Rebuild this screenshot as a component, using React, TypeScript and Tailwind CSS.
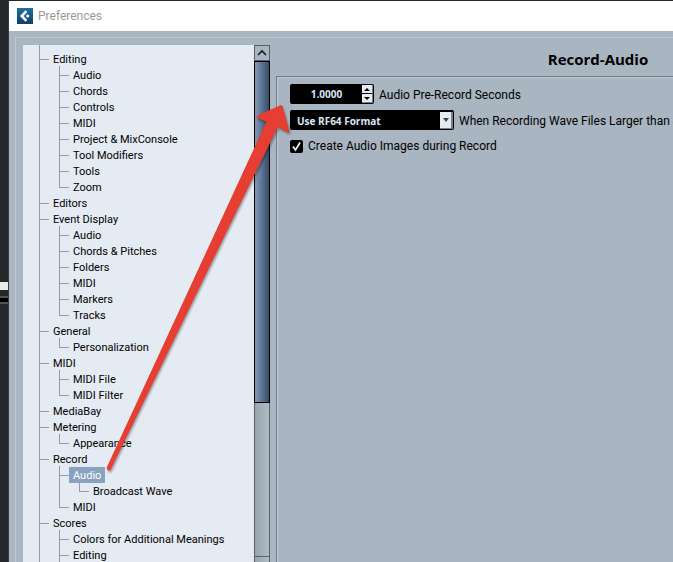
import { useState } from "react";

type TreeNode = {
    label: string;
    children?: TreeNode[];
    more?: boolean; // the branch line carries on below this entry
}

const leaves = (...labels: string[]): TreeNode[] => labels.map((label) => ({ label }));

const sections: TreeNode[] = [
    { label: 'Editing', children: leaves('Audio', 'Chords', 'Controls', 'MIDI', 'Project & MixConsole', 'Tool Modifiers', 'Tools', 'Zoom') },
    { label: 'Editors' },
    { label: 'Event Display', children: leaves('Audio', 'Chords & Pitches', 'Folders', 'MIDI', 'Markers', 'Tracks') },
    { label: 'General', children: leaves('Personalization') },
    { label: 'MIDI', children: leaves('MIDI File', 'MIDI Filter') },
    { label: 'MediaBay' },
    { label: 'Metering', children: leaves('Appearance') },
    { label: 'Record', children: [{ label: 'Audio', children: leaves('Broadcast Wave') }, { label: 'MIDI' }] },
    { label: 'Scores', more: true, children: [{ label: 'Colors for Additional Meanings' }, { label: 'Editing', more: true }] },
];

function Branch({ node, path, last, selected, onSelect }: {
    node: TreeNode;
    path: string;
    last: boolean;
    selected: string;
    onSelect: (path: string) => void;
}) {
    const active = path === selected;

    return (
        <li className="relative">
            <span className={`absolute -top-px left-0 w-px bg-[#939eac] ${last ? 'h-[10px]' : 'bottom-0'}`} />
            <div className="flex h-4 items-center">
                <span className="h-px w-[10px] bg-[#939eac]" />
                <button
                    type="button"
                    onClick={() => onSelect(path)}
                    className={`h-4 px-1 leading-[18px] whitespace-nowrap ${active ? 'bg-[#87a3bf] text-white' : ''}`}
                >
                    {node.label}
                </button>
            </div>
            {node.children && (
                <ul className="ml-5">
                    {node.children.map((child, i) => (
                        <Branch
                            key={child.label}
                            node={child}
                            path={`${path}-${child.label}`}
                            last={i === node.children!.length - 1 && !child.more}
                            selected={selected}
                            onSelect={onSelect}
                        />
                    ))}
                </ul>
            )}
        </li>
    );
}

function TitleBar() {
    return (
        <header className="flex h-[30px] shrink-0 items-center gap-[5px] bg-white pl-2">
            <svg className="size-4" viewBox="0 0 16 16">
                <defs>
                    <linearGradient id="logo" x1="0" y1="0" x2="0" y2="1">
                        <stop offset="0" stopColor="#1f6f9f" />
                        <stop offset="1" stopColor="#123f63" />
                    </linearGradient>
                </defs>
                <rect width="16" height="16" fill="url(#logo)" />
                <path d="M8.500 2.300 3 8l5.500 5.700 1.700-1.800L6.700 8l3.500-3.900z" fill="#fff" />
                <circle cx="10.700" cy="8" r="1.600" fill="#fff" />
            </svg>
            <span className="text-[12px] leading-4 text-[#999]">Preferences</span>
        </header>
    );
}

function ScrollBar() {
    return (
        <div className="flex w-4 shrink-0 flex-col border-x border-[#56616d] bg-linear-to-r from-[#98a4ae] to-[#b0bbc5]">
            <button type="button" aria-label="Scroll up" className="flex h-4 items-center justify-center border-y border-[#56616d] bg-[#a9b5bf]">
                <svg className="h-2 w-3" viewBox="0 0 12 8">
                    <path d="M2 6 6 2l4 4" fill="none" stroke="#111a24" strokeWidth="1.600" />
                </svg>
            </button>
            <div className="-mx-px h-[342px] shrink-0 border border-black bg-linear-to-r from-[#8298b0] via-[#5b7595] to-[#384a61]" />
            <div className="grow" />
            <div className="h-[6px] shrink-0 border-t border-[#56616d]" />
        </div>
    );
}

function Spinner() {
    const [value, setValue] = useState(1);

    return (
        <div className="flex h-5 w-[84px] shrink-0 rounded-[2px] bg-black p-px">
            <input
                id="pre-record"
                value={value.toFixed(4)}
                onChange={(e) => setValue(Number(e.target.value) || 0)}
                className="w-[71px] text-center font-['Open_Sans'] text-[10px] font-bold text-[#dbe6f5]"
            />
            <div className="flex w-[11px] flex-col gap-px border-r border-b border-[#77808a]">
                <button type="button" aria-label="Increase" onClick={() => setValue(value + 1)} className="flex flex-1 items-center justify-center bg-[#e4ebf3]">
                    <svg className="h-[3px] w-[6px]" viewBox="0 0 6 3"><path d="M0 3 3 0l3 3z" /></svg>
                </button>
                <button type="button" aria-label="Decrease" onClick={() => setValue(Math.max(0, value - 1))} className="flex flex-1 items-center justify-center bg-[#e4ebf3]">
                    <svg className="h-[3px] w-[6px]" viewBox="0 0 6 3"><path d="M0 0h6L3 3z" /></svg>
                </button>
            </div>
        </div>
    );
}

function RecordAudioPage() {
    return (
        <main className="flex w-[644px] shrink-0 flex-col">
            <h1 className="pt-1 pb-[7px] text-center font-['Open_Sans'] text-[15px] leading-5 font-bold">Record-Audio</h1>
            <div className="flex grow flex-col gap-[6px] border-t border-l border-[#6f7b88] pt-[7px] pl-[13px] text-[12px] leading-[22px] shadow-[inset_1px_1px_0_#c0cad4]">
                <div className="flex h-5 gap-[5px]">
                    <Spinner />
                    <label htmlFor="pre-record">Audio Pre-Record Seconds</label>
                </div>
                <div className="flex h-5 gap-[5px]">
                    <div className="relative h-5 w-[164px] shrink-0">
                        <select id="wave-format" className="h-5 w-full appearance-none rounded-[2px] bg-black pl-[7px] font-['Open_Sans'] text-[10px] font-bold text-[#dbe6f5]">
                            <option>Use RF64 Format</option>
                            <option>Split Files</option>
                            <option>Use Wave64 Format</option>
                        </select>
                        <span className="pointer-events-none absolute top-[2px] right-px flex h-[17px] w-[13px] items-center justify-center border-r-2 border-b border-[#77808a] bg-[#e4ebf3]">
                            <svg className="h-1 w-[6px]" viewBox="0 0 6 4"><path d="M0 0h6L3 4z" fill="#3c4650" /></svg>
                        </span>
                    </div>
                    <label htmlFor="wave-format" className="whitespace-nowrap">When Recording Wave Files Larger than 4GB</label>
                </div>
                <label className="flex h-5 items-center gap-[5px]">
                    <span className="relative size-[13px]">
                        <input type="checkbox" defaultChecked className="peer block size-[13px] appearance-none rounded-[2px] bg-black" />
                        <svg className="pointer-events-none absolute inset-0 hidden size-[13px] peer-checked:block" viewBox="0 0 13 13">
                            <path d="m3 6.500 2.500 3.500L10 2.500" fill="none" stroke="#fff" strokeWidth="1.600" />
                        </svg>
                    </span>
                    Create Audio Images during Record
                </label>
            </div>
        </main>
    );
}

export default function App() {
    const [selected, setSelected] = useState('Record-Audio');

    return (
        <div className="relative flex h-screen overflow-hidden bg-[#24282b] pt-px font-['Roboto',sans-serif] text-black">
            <div className="flex w-[9px] shrink-0 flex-col border-r border-[#3a3a3d]">
                <div className="h-[281px]" />
                <div className="h-2 bg-[#e9e9e9]" />
                <div className="mt-[6px] h-2 border-y-2 border-[#55525a] bg-black" />
            </div>
            <div className="flex min-w-0 grow flex-col bg-[#a9b5c1]">
                <TitleBar />
                <div className="mt-[6px] ml-[6px] flex min-h-0 grow border-t border-l border-[#bdc8d2] pt-[7px] pl-[7px]">
                    <nav aria-label="Preference pages" className="w-[231px] shrink-0 overflow-hidden bg-[#e4ebf3] pl-4 text-[11px]">
                        <div className="h-[6px] w-px bg-[#939eac]" />
                        <ul>
                            {sections.map((node, i) => (
                                <Branch
                                    key={node.label}
                                    node={node}
                                    path={node.label}
                                    last={i === sections.length - 1 && !node.more}
                                    selected={selected}
                                    onSelect={setSelected}
                                />
                            ))}
                        </ul>
                    </nav>
                    <ScrollBar />
                    <div className="w-[6px] shrink-0" />
                    <RecordAudioPage />
                </div>
            </div>
            <svg className="pointer-events-none absolute top-0 left-0 h-[562px] w-[673px] drop-shadow-[1px_2px_1px_rgba(0,0,0,0.35)]" viewBox="0 0 673 562">
                <path d="M107 468 267 121.500 257.500 117.500V116L281 105.500 282 106 289 131.500 288 132 277.500 126.500 110 470q-2 1-3-2z" fill="#e63e32" stroke="#e63e32" strokeLinejoin="round" />
            </svg>
        </div>
    );
}
